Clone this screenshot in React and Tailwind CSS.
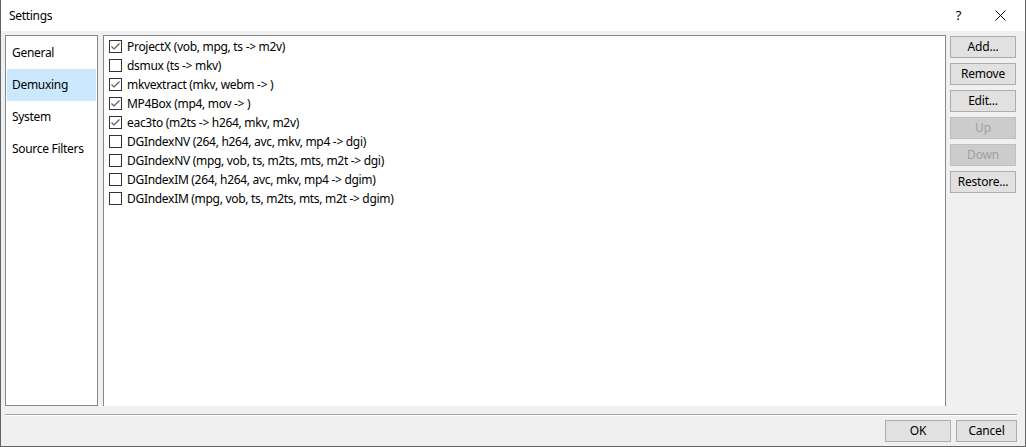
import React from "react";

const items = [
  { label: "ProjectX (vob, mpg, ts -> m2v)", checked: true },
  { label: "dsmux (ts -> mkv)", checked: false },
  { label: "mkvextract (mkv, webm -> )", checked: true },
  { label: "MP4Box (mp4, mov -> )", checked: true },
  { label: "eac3to (m2ts -> h264, mkv, m2v)", checked: true },
  { label: "DGIndexNV (264, h264, avc, mkv, mp4 -> dgi)", checked: false },
  { label: "DGIndexNV (mpg, vob, ts, m2ts, mts, m2t -> dgi)", checked: false },
  { label: "DGIndexIM (264, h264, avc, mkv, mp4 -> dgim)", checked: false },
  { label: "DGIndexIM (mpg, vob, ts, m2ts, mts, m2t -> dgim)", checked: false },
];

const nav = ["General", "Demuxing", "System", "Source Filters"];

const sideButtons = [
  { label: "Add...", disabled: false },
  { label: "Remove", disabled: false },
  { label: "Edit...", disabled: false },
  { label: "Up", disabled: true },
  { label: "Down", disabled: true },
  { label: "Restore...", disabled: false },
];

function Checkbox({ checked }) {
  return (
    <div className="w-[13px] h-[13px] border border-[#333333] bg-white flex items-center justify-center shrink-0">
      {checked && (
        <svg width="11" height="11" viewBox="0 0 11 11">
          <path d="M1.5 5.5 L4 8 L9.5 2.5" fill="none" stroke="#5a5a5a" strokeWidth="1.2" />
        </svg>
      )}
    </div>
  );
}

function Btn({ label, disabled, w = "w-[66px]" }) {
  return (
    <div
      className={`${w} h-[22px] flex items-center justify-center border text-[12px] tracking-[-0.2px] ${
        disabled
          ? "bg-[#cccccc] border-[#bfbfbf] text-[#a0a0a0]"
          : "bg-[#e1e1e1] border-[#adadad] text-black"
      }`}
    >
      {label}
    </div>
  );
}

export default function App() {
  return (
    <div
      className="w-[1026px] h-[447px] flex flex-col border-x border-b border-[#646464] bg-[#f0f0f0] overflow-hidden"
      style={{ fontFamily: '"Segoe UI", "Noto Sans", "Open Sans", sans-serif' }}
    >
      <div className="h-[31px] bg-white flex items-center shrink-0 text-[12px] text-black tracking-[-0.3px]">
        <div className="pl-[8px] flex-1">Settings</div>
        <div className="w-[13px] text-center text-[13px] mr-[29px]">?</div>
        <div className="w-[12px] h-[12px] mr-[19px] flex items-center justify-center">
          <svg width="11" height="11" viewBox="0 0 11 11">
            <path d="M0.5 0.5 L10.5 10.5 M10.5 0.5 L0.5 10.5" stroke="#000" strokeWidth="1" />
          </svg>
        </div>
      </div>
      <div className="flex-1 flex flex-col pt-[4px] pl-[4px] pr-[8px]">
        <div className="h-[371px] flex">
          <div className="w-[93px] h-full border border-[#828790] bg-white pt-[1px] px-[1px] text-[12px] text-black tracking-[-0.3px]">
            {nav.map((n, i) => (
              <div
                key={n}
                className={`h-[32px] flex items-center pl-[5px] ${i === 1 ? "bg-[#cce8ff]" : ""}`}
              >
                {n}
              </div>
            ))}
          </div>
          <div className="ml-[5px] w-[843px] h-full border border-[#828790] border-b-0 bg-white pt-[1px] pl-[5px] text-[12px] text-black tracking-[-0.3px]">
            {items.map((it) => (
              <div key={it.label} className="h-[19px] flex items-center gap-[5px]">
                <Checkbox checked={it.checked} />
                <span>{it.label}</span>
              </div>
            ))}
          </div>
          <div className="ml-[4px] flex flex-col gap-[5px] pt-[1px]">
            {sideButtons.map((b) => (
              <Btn key={b.label} label={b.label} disabled={b.disabled} />
            ))}
          </div>
        </div>
        <div className="mt-[8px] h-[2px] border-t border-[#a0a0a0] border-b border-b-white" />
        <div className="mt-[4px] flex justify-end gap-[5px]">
          <Btn label="OK" w="w-[66px]" />
          <Btn label="Cancel" w="w-[61px]" />
        </div>
      </div>
    </div>
  );
}
